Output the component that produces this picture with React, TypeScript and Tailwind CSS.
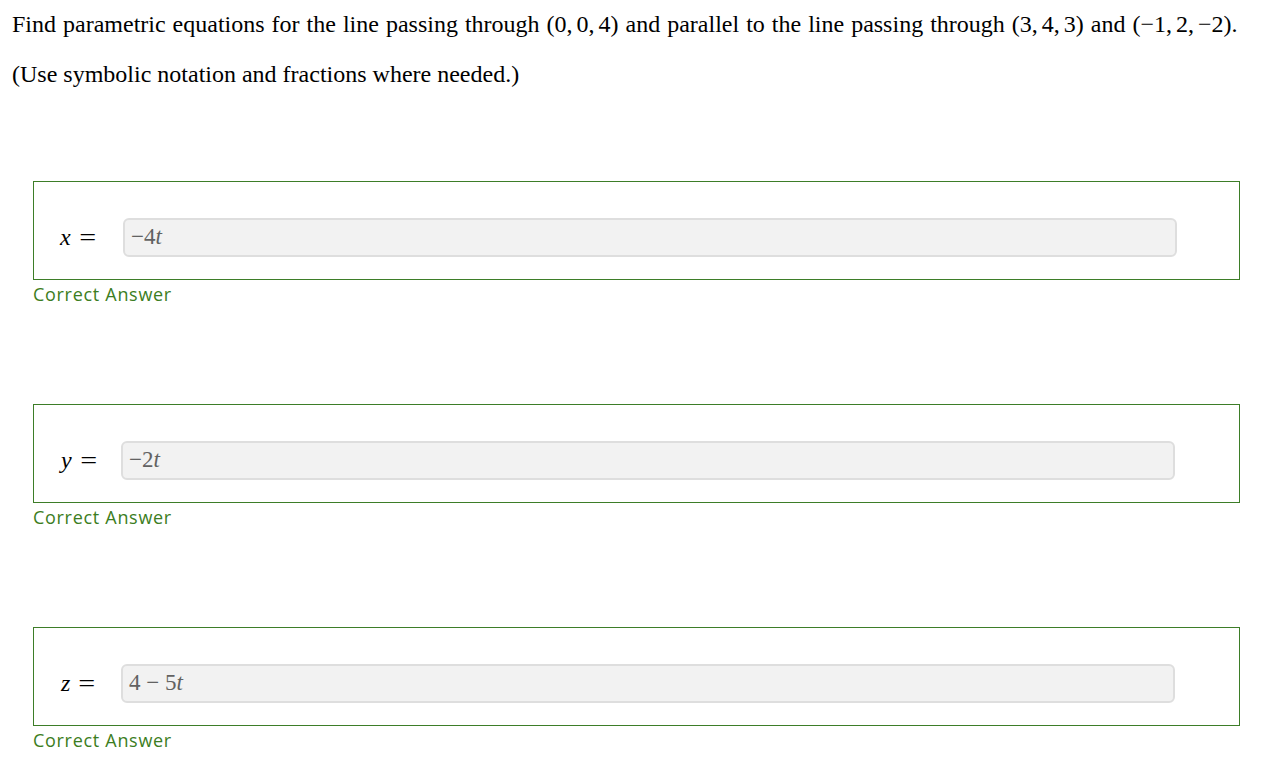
const rows = [
  { v: 'x', left: 'ml-[26px]', gap: 'w-[89px]', value: (<><span>−4</span><i>t</i></>) },
  { v: 'y', left: 'ml-[27px]', gap: 'w-[87px]', value: (<><span>−2</span><i>t</i></>) },
  { v: 'z', left: 'ml-[27px]', gap: 'w-[87px]', value: (<><span>4 − 5</span><i>t</i></>) },
];

function Pt({ c }: { c: string[] }) {
  return (
    <span className="whitespace-nowrap">
      (
      {c.map((n, i) => (
        <span key={i}>
          {n}
          {i < c.length - 1 && <span className="mr-[4px]">,</span>}
        </span>
      ))}
      )
    </span>
  );
}

export default function App() {
  return (
    <div className="min-h-screen bg-white text-black" style={{ fontFamily: '"Liberation Serif", "Times New Roman", serif' }}>
      <div className="pl-[12px] pt-[10px]">
        <p className="text-[24px] leading-[28px] whitespace-nowrap [word-spacing:1px]">
          Find parametric equations for the line passing through <Pt c={['0', '0', '4']} /> and parallel to the line passing through{' '}
          <Pt c={['3', '4', '3']} /> and <Pt c={['−1', '2', '−2']} />.
        </p>
        <p className="mt-[22px] text-[24px] leading-[28px]">(Use symbolic notation and fractions where needed.)</p>
      </div>

      <div className="mt-[93px] flex flex-col">
        {rows.map((r, i) => (
          <div key={r.v} className={i > 0 ? 'mt-[98px]' : ''}>
            <div className="ml-[33px] flex h-[99px] w-[1207px] items-start border border-[#3d7d28] pt-[36px]">
              <div className={`${r.gap} flex shrink-0 items-center pt-[2px]`}>
                <span className={`${r.left} flex items-center text-[24px] leading-[34px]`}>
                  <i>{r.v}</i>
                  <span className="ml-[10px] inline-block scale-x-125">=</span>
                </span>
              </div>
              <div className="flex h-[39px] w-[1054px] items-center rounded-[6px] border-2 border-[#dedede] bg-[#f2f2f2] pl-[6px] text-[23px] text-[#626262]">
                {r.value}
              </div>
            </div>
            <div
              className="ml-[33px] mt-[2px] text-[18px] leading-[24px] tracking-[0.7px] text-[#3c7d22]"
              style={{ fontFamily: '"Open Sans", "Noto Sans", sans-serif' }}
            >
              Correct Answer
            </div>
          </div>
        ))}
      </div>
    </div>
  );
}
